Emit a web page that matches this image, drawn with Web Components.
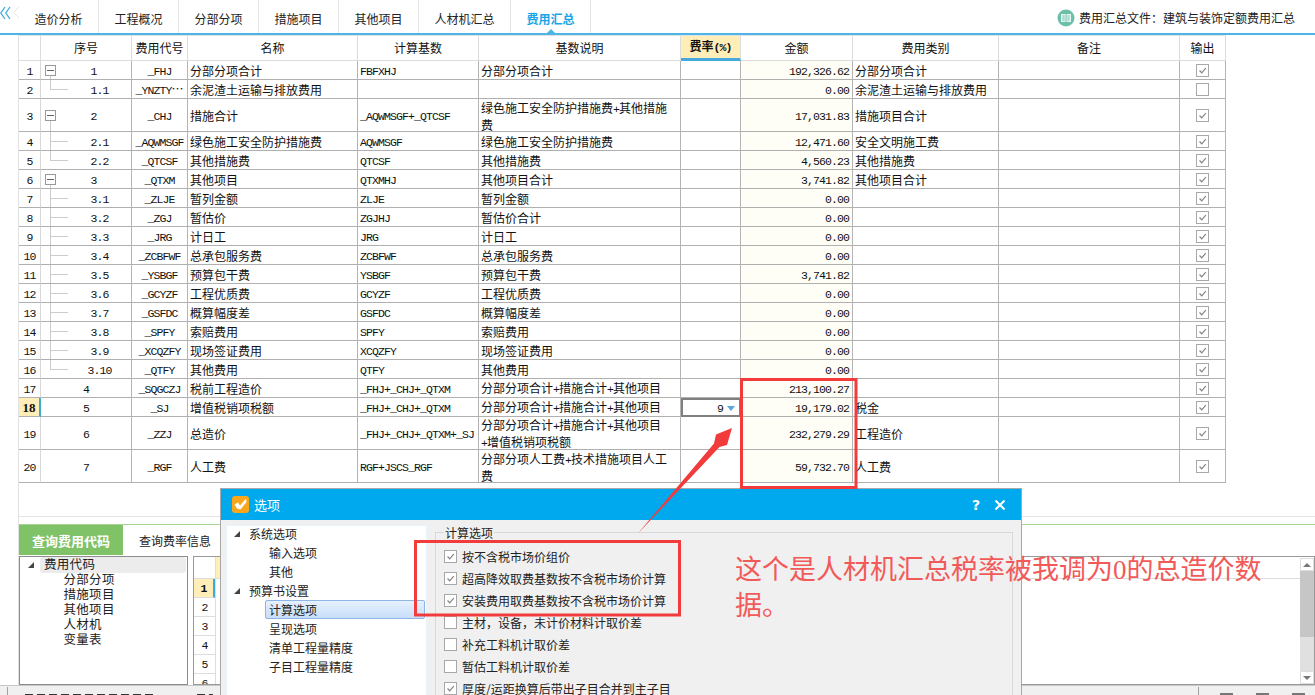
<!DOCTYPE html>
<html lang="zh-CN">
<head>
<meta charset="utf-8">
<title>费用汇总</title>
<style>
html,body{margin:0;padding:0;background:#fff}
body{position:relative;width:1315px;height:695px;overflow:hidden;display:flex;flex-direction:column;font:12px/15px "Noto Sans CJK SC","Liberation Sans",sans-serif;color:#111}
</style>
</head>
<body>
<fee-tabs></fee-tabs>
<fee-table></fee-table>
<query-panel></query-panel>
<status-strip></status-strip>
<options-dialog></options-dialog>
<markup-layer></markup-layer>
<script>
const esc=s=>s.replace(/&/g,'&amp;').replace(/</g,'&lt;');
const mix=s=>esc(s).replace(/[\x21-\x7e]+/g,m=>`<span class="m">${m}</span>`);
const latin=`.m{font-family:"Liberation Mono",monospace;font-size:11.5px;letter-spacing:-.9px}`;
const CHECK=`<svg viewBox="0 0 13 13" width="11" height="11"><path d="M3 6.5 5.6 9.2 10.4 3.6" fill="none" stroke="#858585" stroke-width="1.4"/></svg>`;

customElements.define('fee-tabs',class extends HTMLElement{
  connectedCallback(){
    const tabs=[['造价分析',80],['工程概况',80],['分部分项',80],['措施项目',80],['其他项目',80],['人材机汇总',92],['费用汇总',80]];
    this.attachShadow({mode:'open'}).innerHTML=`<style>
:host{display:flex;height:35px;box-sizing:border-box;border-bottom:2px solid #4db5e5;flex:none}
.back{width:19px;flex:none;display:flex;padding-top:3px;box-sizing:border-box}
.tabs{display:flex;height:33px}
.tab{box-sizing:border-box;display:flex;align-items:center;justify-content:center;border-right:1px solid #e4e4e4;padding-top:3px;position:relative;color:#222}
.tab.on{color:#17a6e6;font-weight:700}
.tab.on::after{content:"";position:absolute;left:50%;bottom:0;margin-left:-4px;border:4px solid transparent;border-top:0;border-bottom-color:#4db5e5}
.file{margin-left:auto;display:flex;align-items:center;gap:4px;padding:2px 20px 0 0;color:#222}
</style>
<div class="back"><svg width="19" height="22" viewBox="0 0 19 22"><path d="M5 4 0.8 10 5 16M10 4 5.8 10 10 16" fill="none" stroke="#3fa9dc" stroke-width="1.3"/><path d="M19 4 13.5 9.5 19 15" fill="none" stroke="#e4e4e4"/></svg></div>
<div class="tabs">${tabs.map((t,i)=>`<div class="tab${i==6?' on':''}" style="width:${t[1]}px">${t[0]}</div>`).join('')}</div>
<div class="file"><svg width="18" height="18" viewBox="0 0 18 18"><circle cx="9" cy="9" r="8.5" fill="#6cc0aa"/><path d="M4 5h10v8H4z" fill="#e9f7f2"/><path d="M9 5v8M5.3 7h2.4M5.3 9h2.4M5.3 11h2.4M10.3 7h2.4M10.3 9h2.4M10.3 11h2.4" stroke="#6cc0aa" fill="none"/></svg><span>费用汇总文件\uFF1A建筑与装饰定额费用汇总</span></div>`;
  }
});

customElements.define('fee-table',class extends HTMLElement{
  connectedCallback(){
    const H=['','序号','费用代号','名称','计算基数','基数说明','费率(%)','金额','费用类别','备注','输出'];
    const L='分部分项合计+措施合计+其他项目';
    const R=[
      ['p','1','_FHJ','分部分项合计','FBFXHJ','分部分项合计','192,326.62','分部分项合计',1,19],
      ['l','1.1','_YNZTY⋯','余泥渣土运输与排放费用','','','0.00','余泥渣土运输与排放费用',0,19],
      ['p','2','_CHJ','措施合计','_AQWMSGF+_QTCSF','绿色施工安全防护措施费+其他措施\n费','17,031.83','措施项目合计',1,33],
      ['c','2.1','_AQWMSGF','绿色施工安全防护措施费','AQWMSGF','绿色施工安全防护措施费','12,471.60','安全文明施工费',1,19],
      ['l','2.2','_QTCSF','其他措施费','QTCSF','其他措施费','4,560.23','其他措施费',1,19],
      ['p','3','_QTXM','其他项目','QTXMHJ','其他项目合计','3,741.82','其他项目合计',1,19],
      ['c','3.1','_ZLJE','暂列金额','ZLJE','暂列金额','0.00','',1,19],
      ['c','3.2','_ZGJ','暂估价','ZGJHJ','暂估价合计','0.00','',1,19],
      ['c','3.3','_JRG','计日工','JRG','计日工','0.00','',1,19],
      ['c','3.4','_ZCBFWF','总承包服务费','ZCBFWF','总承包服务费','0.00','',1,19],
      ['c','3.5','_YSBGF','预算包干费','YSBGF','预算包干费','3,741.82','',1,19],
      ['c','3.6','_GCYZF','工程优质费','GCYZF','工程优质费','0.00','',1,19],
      ['c','3.7','_GSFDC','概算幅度差','GSFDC','概算幅度差','0.00','',1,19],
      ['c','3.8','_SPFY','索赔费用','SPFY','索赔费用','0.00','',1,19],
      ['c','3.9','_XCQZFY','现场签证费用','XCQZFY','现场签证费用','0.00','',1,19],
      ['l','3.10','_QTFY','其他费用','QTFY','其他费用','0.00','',1,19],
      ['','4','_SQGCZJ','税前工程造价','_FHJ+_CHJ+_QTXM',L,'213,100.27','',1,19],
      ['','5','_SJ','增值税销项税额','_FHJ+_CHJ+_QTXM',L,'19,179.02','税金',1,19],
      ['','6','_ZZJ','总造价','_FHJ+_CHJ+_QTXM+_SJ',L+'\n+增值税销项税额','232,279.29','工程造价',1,33],
      ['','7','_RGF','人工费','RGF+JSCS_RGF','分部分项人工费+技术措施项目人工\n费','59,732.70','人工费',1,33]
    ];
    const cell=(cls,s)=>`<div class="c ${cls}"><span class="v">${s}</span></div>`;
    const row=(r,i)=>{
      const n=i+1,sel=n==18;
      const seq=r[0]=='p'?`<div class="c seq tp"><i class="box"></i><span class="sq"><span class="m">${r[1]}</span></span></div>`
        :r[0]?`<div class="c seq t${r[0]}"><span class="sq ch"><span class="m">${r[1]}</span></span></div>`
        :`<div class="c seq plain"><span class="sq"><span class="m">${r[1]}</span></span></div>`;
      return `<div class="row" style="height:${r[9]}px">
${cell('no'+(sel?' cur':''),sel?n:`<span class="m">${n}</span>`)}${seq}
${cell('ctr',mix(r[2]))}${cell('',mix(r[3]))}${cell('',mix(r[4]))}${cell('',mix(r[5]))}
<div class="c ${sel?'edit':''}">${sel?'<span class="m">9</span><i class="drop"></i>':''}</div>
${cell('amt',mix(r[6]))}${cell('',mix(r[7]))}<div class="c"></div>
<div class="c ctr chk"><span class="cb">${r[8]?CHECK:''}</span></div></div>`;
    };
    this.attachShadow({mode:'open'}).innerHTML=`<style>
:host{display:block;flex:none;height:481px;margin-left:18px;border-left:1px solid #e2e2e2;border-bottom:1px solid #e4e4e4;--cols:22px 91px 56px 170px 121px 202px 60px 112px 146px 181px 46px}
${latin}
.row{display:grid;grid-template-columns:var(--cols);box-sizing:border-box;width:1207px}
.c{box-sizing:border-box;border-right:1px solid #b4b4b4;border-bottom:1px solid #b0b0b0;padding:1px 0 0 2px;display:flex;align-items:center;white-space:pre;min-width:0;overflow:hidden}
.head{height:26px}
.head .c{justify-content:center;border-color:#dcdcdc;border-top:1px solid #e2e2e2;padding:0 0 2px}
.head .rate{background:#ffeeb8;font-weight:700;border-bottom:3px solid #45a9de;border-right-color:#dcdcdc;padding:0 0 1px}
.no{justify-content:center;padding:1px 0 0;border-color:#d8d8d8;border-bottom-color:#b0b0b0}
.no.cur{background:#ffeeb8;font-weight:700;font-size:13px;border-right:2px solid #3fa9dc;font-family:"Liberation Serif",serif}
.seq{padding:1px 0 0 4px}
.seq.plain{padding-left:0}
.sq{flex:1;text-align:center}
.sq.ch{padding-left:23px}
.box{flex:none;width:11px;height:11px;box-sizing:border-box;border:1px solid #999;background:linear-gradient(#666,#666) center/7px 1px no-repeat #fff}
.tp{background:linear-gradient(#ccc,#ccc) 9px 100%/1px 50% no-repeat}
.tc{background:linear-gradient(#ccc,#ccc) 9px 0/1px 100% no-repeat,linear-gradient(#ccc,#ccc) 9px 50%/18px 1px no-repeat}
.tl{background:linear-gradient(#ccc,#ccc) 9px 0/1px 50% no-repeat,linear-gradient(#ccc,#ccc) 9px 50%/18px 1px no-repeat}
.ctr{justify-content:center;padding-left:0}
.amt{background:#fffef6;justify-content:flex-end;padding-right:3px}
.edit{border:2px solid #808080;justify-content:flex-end;padding:1px 4px 0 0;gap:4px}
.drop{width:0;height:0;border:4.5px solid transparent;border-top:5px solid #5aa5dc;border-bottom:0;margin-top:1px}
.chk{padding:0}
.cb{width:11px;height:11px;border:1px solid #a8a8a8;display:block;background:#fff}
.cb svg{display:block}
</style>
<div class="row head">${H.map((h,i)=>`<div class="c${i==6?' rate':''}"><span class="v">${i==6?mix(h):h}</span></div>`).join('')}</div>
${R.map(row).join('')}`;
  }
});

customElements.define('query-panel',class extends HTMLElement{
  connectedCallback(){
    this.attachShadow({mode:'open'}).innerHTML=`<style>
:host{display:block;flex:none;margin-left:18px;border-left:1px solid #e2e2e2;padding-top:7px;height:168px;box-sizing:border-box}
${latin}
.tabs{display:flex;height:31px;box-sizing:border-box;border-top:1px solid #a8d596}
.t1{width:104px;background:#80c268;color:#fff;font-weight:700;display:flex;align-items:center;justify-content:center;font-size:13px}
.t2{width:104px;display:flex;align-items:center;justify-content:center;color:#222}
.main{display:flex;gap:5px;margin-top:1px;height:129px}
.tree{width:169px;box-sizing:border-box;border:1.5px solid #8c8c8c;font-size:12.5px;letter-spacing:.3px;color:#222}
.tree .r{padding-left:43.5px;height:15px;line-height:11px}
.tree .top{padding-left:8px;display:flex;align-items:center;height:16px}
.tri{width:0;height:0;border-left:6px solid transparent;border-bottom:6px solid #444;margin-right:6px;flex:none}
.sel{flex:1;background:#ececec;border-radius:3px;margin-right:1px;padding-left:4px;line-height:14px;height:16px}
.grid{flex:1;box-sizing:border-box;border:1.5px solid #999;display:flex;overflow:hidden}
.nums{width:21px;flex:none;border-right:1px solid #ddd}
.hd{height:22px;border-bottom:1px solid #ddd;box-sizing:border-box}
.n{height:19px;box-sizing:border-box;border-bottom:1px solid #ddd;display:flex;align-items:center;justify-content:center;padding-top:1px}
.n.cur{background:#ffeeb8;font-weight:700;border-right:2px solid #3fa9dc}
.col{flex:1}
.col .hd{background:linear-gradient(90deg,#ffeeb8 8px,#fff 8px)}
.bar{width:14px;flex:none;background:#e0e0e0;display:flex;flex-direction:column;margin-top:1px}
.btn{height:13px;background:#fff;border:1px solid #ddd;box-sizing:border-box;display:flex;align-items:center;justify-content:center;flex:none}
.up{width:0;height:0;border:4px solid transparent;border-top:0;border-bottom:4px solid #777}
.dn{width:0;height:0;border:4px solid transparent;border-bottom:0;border-top:4px solid #777}
.thumb{height:66px;background:#c6c6c6;flex:none}
.sp{flex:1}
</style>
<div class="tabs"><div class="t1">查询费用代码</div><div class="t2">查询费率信息</div></div>
<div class="main">
<div class="tree"><div class="r top"><i class="tri"></i><span class="sel">费用代码</span></div>
<div class="r">分部分项</div><div class="r">措施项目</div><div class="r">其他项目</div><div class="r">人材机</div><div class="r">变量表</div></div>
<div class="grid"><div class="nums"><div class="hd"></div>${[1,2,3,4,5,6].map(n=>`<div class="n${n==1?' cur':''}"><span class="m">${n}</span></div>`).join('')}</div>
<div class="col"><div class="hd"></div></div>
<div class="bar"><div class="btn"><i class="up"></i></div><div class="thumb"></div><div class="sp"></div><div class="btn"><i class="dn"></i></div></div></div>
</div>`;
  }
});

customElements.define('status-strip',class extends HTMLElement{
  connectedCallback(){
    this.attachShadow({mode:'open'}).innerHTML=`<style>
:host{display:flex;flex:none;height:11px;background:#f0f0f0;border-top:1px solid #c8c8c8;box-sizing:border-box}
.tick{width:1px;height:9px;background:#a0a0a0;margin:1px 0 0 7px}
.cut{height:2px;margin:8px 0 0 17px;width:130px;background:repeating-linear-gradient(90deg,#333 0 8px,transparent 8px 12px)}
.cut.b{width:16px;margin-left:42px}
.tail{margin-left:auto;display:flex;align-items:flex-start}
.tick2{width:1px;height:9px;background:#a0a0a0;margin-top:1px;margin-right:21px}
.ic{width:13px;height:3px;background:#777;margin:7px 23px 0 0}
.ic:last-child{margin-right:10px}
</style><div class="tick"></div><div class="cut"></div><div class="cut b"></div><div class="tail"><div class="tick2"></div><div class="ic"></div><div class="ic"></div><div class="ic"></div></div>`;
  }
});

customElements.define('options-dialog',class extends HTMLElement{
  connectedCallback(){
    const tree=[[0,'系统选项'],[1,'输入选项'],[1,'其他'],[0,'预算书设置'],[2,'计算选项'],[1,'呈现选项'],[1,'清单工程量精度'],[1,'子目工程量精度']];
    const opts=[[1,'按不含税市场价组价'],[1,'超高降效取费基数按不含税市场价计算'],[1,'安装费用取费基数按不含税市场价计算'],[0,'主材\uFF0C设备\uFF0C未计价材料计取价差'],[0,'补充工料机计取价差'],[0,'暂估工料机计取价差'],[1,'厚度/运距换算后带出子目合并到主子目']];
    this.attachShadow({mode:'open'}).innerHTML=`<style>
:host{display:flex;flex-direction:column;position:absolute;left:220px;top:488px;width:802px;height:210px;box-sizing:border-box;border:1.5px solid #a8a8a8;background:#f0f0f0;overflow:hidden;font-size:12px;color:#222}
.title{height:31px;flex:none;background:#00a9ee;color:#fff;display:flex;align-items:center;padding:0 15px 0 11px;font-size:13px;gap:5px}
.title .sp{flex:1}
.title b{font-family:"DejaVu Sans",sans-serif;font-size:14px;line-height:14px}
.title svg.x{margin-left:9px}
.body{flex:1;display:flex;padding:5px 8px 0 5px;gap:8px;min-height:0}
.nav{width:201px;flex:none;background:#fff;border:1px solid #e8f3fa;border-bottom:0;box-sizing:border-box;padding-top:0}
.it{height:19px;display:flex;align-items:center;box-sizing:border-box;position:relative;top:-2px}
.it.l0{padding-left:7px}.it.l1,.it.l2{padding-left:42px}
.tri{width:0;height:0;border-left:6px solid transparent;border-bottom:6px solid #444;margin-right:9px}
.it.l2{margin-left:38px;padding-left:3px;margin-right:1px;background:linear-gradient(#e6f1fd,#c7defa);border:1px solid #8fb4e6;border-radius:2px}
fieldset{flex:1;margin:0;padding:5px 0 0 8px;border:1px solid #d8d8d8;border-bottom:0;min-width:0;box-sizing:border-box}
legend{padding:0 1px;margin:0;line-height:15px;height:15px}
.op{height:22px;display:flex;align-items:center;gap:5px}
.cb{width:11px;height:11px;border:1px solid #a8a8a8;background:#fff;flex:none;display:block}
.cb svg{display:block}
</style>
<div class="title"><svg width="17" height="17" viewBox="0 0 17 17"><rect width="17" height="17" rx="3" fill="#f9a61a"/><path d="M2.5 8.5 6 6.5 8 9.5 14 2.5 14.5 6 8.5 13.5 5 12.5z" fill="#fff"/></svg><span>选项</span><span class="sp"></span><b>?</b><svg class="x" width="12" height="12" viewBox="0 0 12 12"><path d="M1.5 1.5 10.5 10.5M10.5 1.5 1.5 10.5" stroke="#fff" stroke-width="2" fill="none"/></svg></div>
<div class="body"><div class="nav">${tree.map(t=>`<div class="it l${t[0]}">${t[0]==0?'<i class="tri"></i>':''}${t[1]}</div>`).join('')}</div>
<fieldset><legend>计算选项</legend>${opts.map(o=>`<div class="op"><span class="cb">${o[0]?CHECK:''}</span><span>${o[1]}</span></div>`).join('')}</fieldset></div>`;
  }
});

customElements.define('markup-layer',class extends HTMLElement{
  connectedCallback(){
    this.attachShadow({mode:'open'}).innerHTML=`<style>
:host{display:block;position:absolute;inset:0;pointer-events:none}
svg{position:absolute;left:0;top:0}
.note{position:absolute;left:735px;top:551px;width:560px;font-size:27px;line-height:34px;color:#f25a5a;font-weight:400;white-space:pre}
.note span{font-family:"Liberation Serif",serif}
</style>
<svg width="1315" height="695"><g fill="none" stroke="#f23c3c" stroke-width="3"><rect x="741.5" y="379.5" width="114.5" height="108"/><rect x="415.5" y="541.5" width="264" height="73.5"/></g>
<polygon points="637.5,534 714,443.5 716,434.5 732,428 727,445 719.5,447" fill="#f23c3c"/></svg>
<div class="note">这个是人材机汇总税率被我调为<span>0</span>的总造价数
据。</div>`;
  }
});
</script>
</body>
</html>
